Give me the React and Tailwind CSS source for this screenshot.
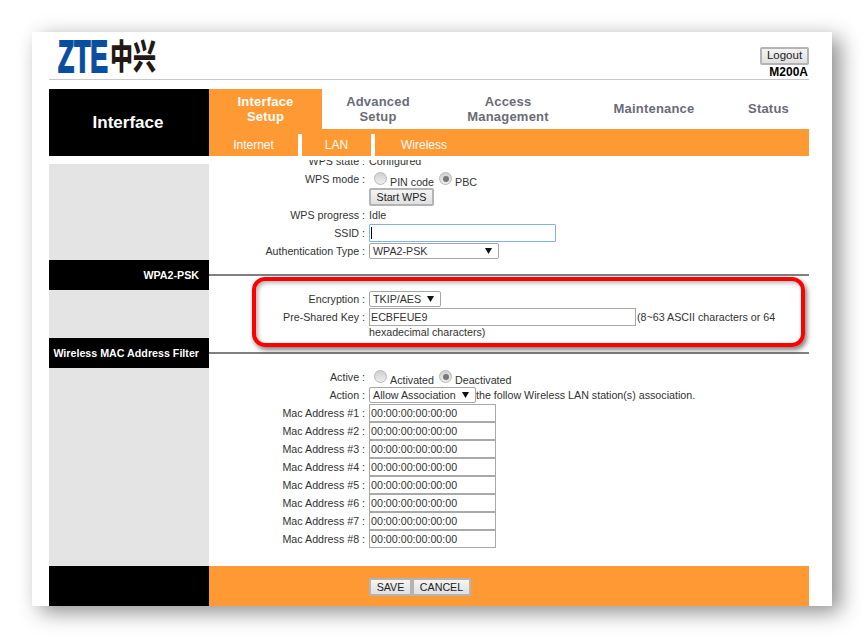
const TABS = [
  { label: ["Advanced", "Setup"], width: "w-[112px]" },
  { label: ["Access", "Management"], width: "w-[148px]" },
  { label: ["Maintenance"], width: "w-[144px]" },
  { label: ["Status"], width: "w-[83px] pl-[2px]" },
];

const MACS = [1, 2, 3, 4, 5, 6, 7, 8];

const Logo = () => (
  <svg width="98" height="36" viewBox="0 0 98 36" className="block overflow-visible">
    <text
      x="0"
      y="33"
      textLength="50"
      lengthAdjust="spacingAndGlyphs"
      fontFamily="'Liberation Sans', sans-serif"
      fontWeight="700"
      fontSize="45"
      fill="#0a4ea2"
      stroke="#0a4ea2"
      strokeWidth="2"
    >
      ZTE
    </text>
    <text
      x="52"
      y="30"
      textLength="46"
      lengthAdjust="spacingAndGlyphs"
      fontFamily="'Noto Sans CJK SC', sans-serif"
      fontWeight="900"
      fontSize="34"
      fill="#231815"
    >
      中兴
    </text>
  </svg>
);

const Btn = ({ className = "", children }) => (
  <button className={`h-[18px] border-2 border-[#b4b4b4] bg-gradient-to-b from-[#f4f4f4] to-[#e0e0e0] text-[10.7px] leading-none text-[#222] ${className}`}>
    {children}
  </button>
);

const Radio = ({ checked }) => (
  <span className="relative -top-[2px] flex h-[13px] w-[13px] items-center justify-center rounded-full border border-[#b8b8b8] bg-gradient-to-b from-[#d0d0d0] to-[#eeeeee]">
    {checked && <span className="h-[6px] w-[6px] rounded-full bg-[#777777]" />}
  </span>
);

const RadioPair = ({ a, b, bChecked }) => (
  <div className="flex items-center pl-[5px] pt-[3px]">
    <Radio />
    <span className="ml-[3px] w-[49px] pt-[3px] whitespace-nowrap">{a}</span>
    <Radio checked={bChecked} />
    <span className="ml-[3px] pt-[3px] whitespace-nowrap">{b}</span>
  </div>
);

const Row = ({ label, children }) => (
  <div className="flex h-[18px] items-center">
    <div className="w-[159px] text-right whitespace-pre">{label}</div>
    <div className="ml-[1px] flex items-center">{children}</div>
  </div>
);

const FakeSelect = ({ value, className = "" }) => (
  <div className={`flex h-[16px] items-center justify-between rounded-[2px] border border-[#a6a6a6] bg-white pl-[3px] pr-[6px] ${className}`}>
    <span className="whitespace-nowrap">{value}</span>
    <svg width="7" height="6" viewBox="0 0 7 6">
      <polygon points="0,0 7,0 3.5,6" fill="#111" />
    </svg>
  </div>
);

const TextBox = ({ value, className = "" }) => (
  <input
    readOnly
    value={value}
    className={`block h-[18px] border border-[#a9a9a9] bg-white pl-[1px] text-[10.7px] text-[#333] outline-none ${className}`}
  />
);

const SideHead = ({ children }) => (
  <div className="flex h-[30px] items-center justify-end whitespace-nowrap bg-black pr-[10px] text-[10.7px] font-bold text-white">
    {children}
  </div>
);

export default function App() {
  return (
    <div className="h-[638px] w-[864px] overflow-hidden bg-white pl-[32px] pt-[32px] font-['Liberation_Sans',Arial,sans-serif] text-[10.7px] text-[#333]">
      <div className="relative h-[574px] w-[800px] bg-white pl-[17px] pr-[23px] shadow-[8px_6px_20px_rgba(0,0,0,0.45)]">
        {/* Header */}
        <div className="flex h-[48px] justify-between border-b border-[#c8c8c8]">
          <div className="pl-[9px] pt-[7px]">
            <Logo />
          </div>
          <div className="flex flex-col items-end pt-[15px]">
            <Btn className="w-[49px] rounded-[2px] border text-[11.5px]">Logout</Btn>
            <div className="pr-[1px] text-[12px] font-bold leading-[14px] text-black">M200A</div>
          </div>
        </div>

        {/* Main nav */}
        <div className="mt-[9px] flex h-[67px]">
          <div className="flex w-[160px] items-center justify-center bg-black pr-[2px] text-[17px] font-bold text-white">
            Interface
          </div>
          <div className="flex-1">
            <div className="flex h-[40px]">
              <div className="flex w-[113px] flex-col items-center bg-[#ff9933] pt-[5px] text-[13px] font-bold leading-[15px] tracking-[0.2px] text-white">
                <span>Interface</span>
                <span>Setup</span>
              </div>
              {TABS.map(({ label, width }) => (
                <div
                  key={label[0]}
                  className={`flex ${width} flex-col items-center text-[13px] font-bold leading-[15px] tracking-[0.2px] text-[#6b6b78] ${label.length === 1 ? "justify-center pb-[2px]" : "pt-[5px]"}`}
                >
                  {label.map((line) => (
                    <span key={line}>{line}</span>
                  ))}
                </div>
              ))}
            </div>
            <div className="flex h-[27px] items-end bg-[#ff9933] text-[12px] text-white">
              <div className="flex h-[22px] w-[93px] items-center justify-center border-r-4 border-white">Internet</div>
              <div className="flex h-[22px] w-[73px] items-center justify-center border-r-4 border-white">LAN</div>
              <div className="flex h-[22px] w-[98px] items-center justify-center">Wireless</div>
            </div>
          </div>
        </div>

        {/* Body */}
        <div className="flex h-[410px]">
          <div className="flex w-[160px] flex-col pt-[8px]">
            <div className="h-[96px] bg-[#e4e4e4]" />
            <SideHead>WPA2-PSK</SideHead>
            <div className="h-[48px] bg-[#e4e4e4]" />
            <SideHead>Wireless MAC Address Filter</SideHead>
            <div className="flex-1 bg-[#e4e4e4]" />
          </div>

          <div className="flex-1 pt-[4px]">
            <div className="h-[406px] overflow-hidden">
              <div className="-mt-[8px]">
                <Row label="WPS state : ">Configured</Row>
                <Row label="WPS mode : ">
                  <RadioPair a="PIN code" b="PBC" bChecked />
                </Row>
                <Row label="">
                  <Btn className="w-[65px] rounded-[2px]">Start WPS</Btn>
                </Row>
                <Row label="WPS progress : ">Idle</Row>
                <Row label="SSID : ">
                  <div className="flex h-[18px] w-[187px] items-center rounded-[1px] border border-[#7eb4ea] pl-[1px]">
                    <span className="h-[12px] w-px bg-black" />
                  </div>
                </Row>
                <Row label="Authentication Type : ">
                  <FakeSelect value="WPA2-PSK" className="w-[130px]" />
                </Row>

                <div className="flex h-[30px] items-center">
                  <div className="h-[2px] w-full bg-[#808080]" />
                </div>

                <Row label="Encryption : ">
                  <FakeSelect value="TKIP/AES" className="w-[72px]" />
                </Row>
                <Row label="Pre-Shared Key : ">
                  <TextBox value="ECBFEUE9" className="w-[267px]" />
                  <span className="ml-[1px] whitespace-nowrap">(8~63 ASCII characters or 64</span>
                </Row>
                <div className="h-[12px] pl-[160px] leading-[12px]">hexadecimal characters)</div>

                <div className="flex h-[30px] items-center">
                  <div className="h-[2px] w-full bg-[#808080]" />
                </div>

                <Row label="Active : ">
                  <RadioPair a="Activated" b="Deactivated" bChecked />
                </Row>
                <Row label="Action : ">
                  <FakeSelect value="Allow Association" className="w-[107px]" />
                  <span className="whitespace-nowrap">the follow Wireless LAN station(s) association.</span>
                </Row>
                {MACS.map((n) => (
                  <Row key={n} label={`Mac Address #${n} : `}>
                    <TextBox value="00:00:00:00:00:00" className="w-[127px]" />
                  </Row>
                ))}
              </div>
            </div>
          </div>
        </div>

        {/* Footer */}
        <div className="flex h-[40px]">
          <div className="w-[160px] bg-black" />
          <div className="flex flex-1 items-start bg-[#ff9933] pl-[160px] pt-[12px]">
            <Btn className="w-[43px]">SAVE</Btn>
            <Btn className="w-[59px]">CANCEL</Btn>
          </div>
        </div>

        {/* Red annotation drawn over the screenshot */}
        <div className="absolute left-[220px] top-[245px] h-[70px] w-[553px] rounded-[13px] border-4 border-[#ff0000] shadow-[2px_3px_5px_rgba(0,0,0,0.5),inset_2px_2px_4px_rgba(0,0,0,0.3)]" />
      </div>
    </div>
  );
}
